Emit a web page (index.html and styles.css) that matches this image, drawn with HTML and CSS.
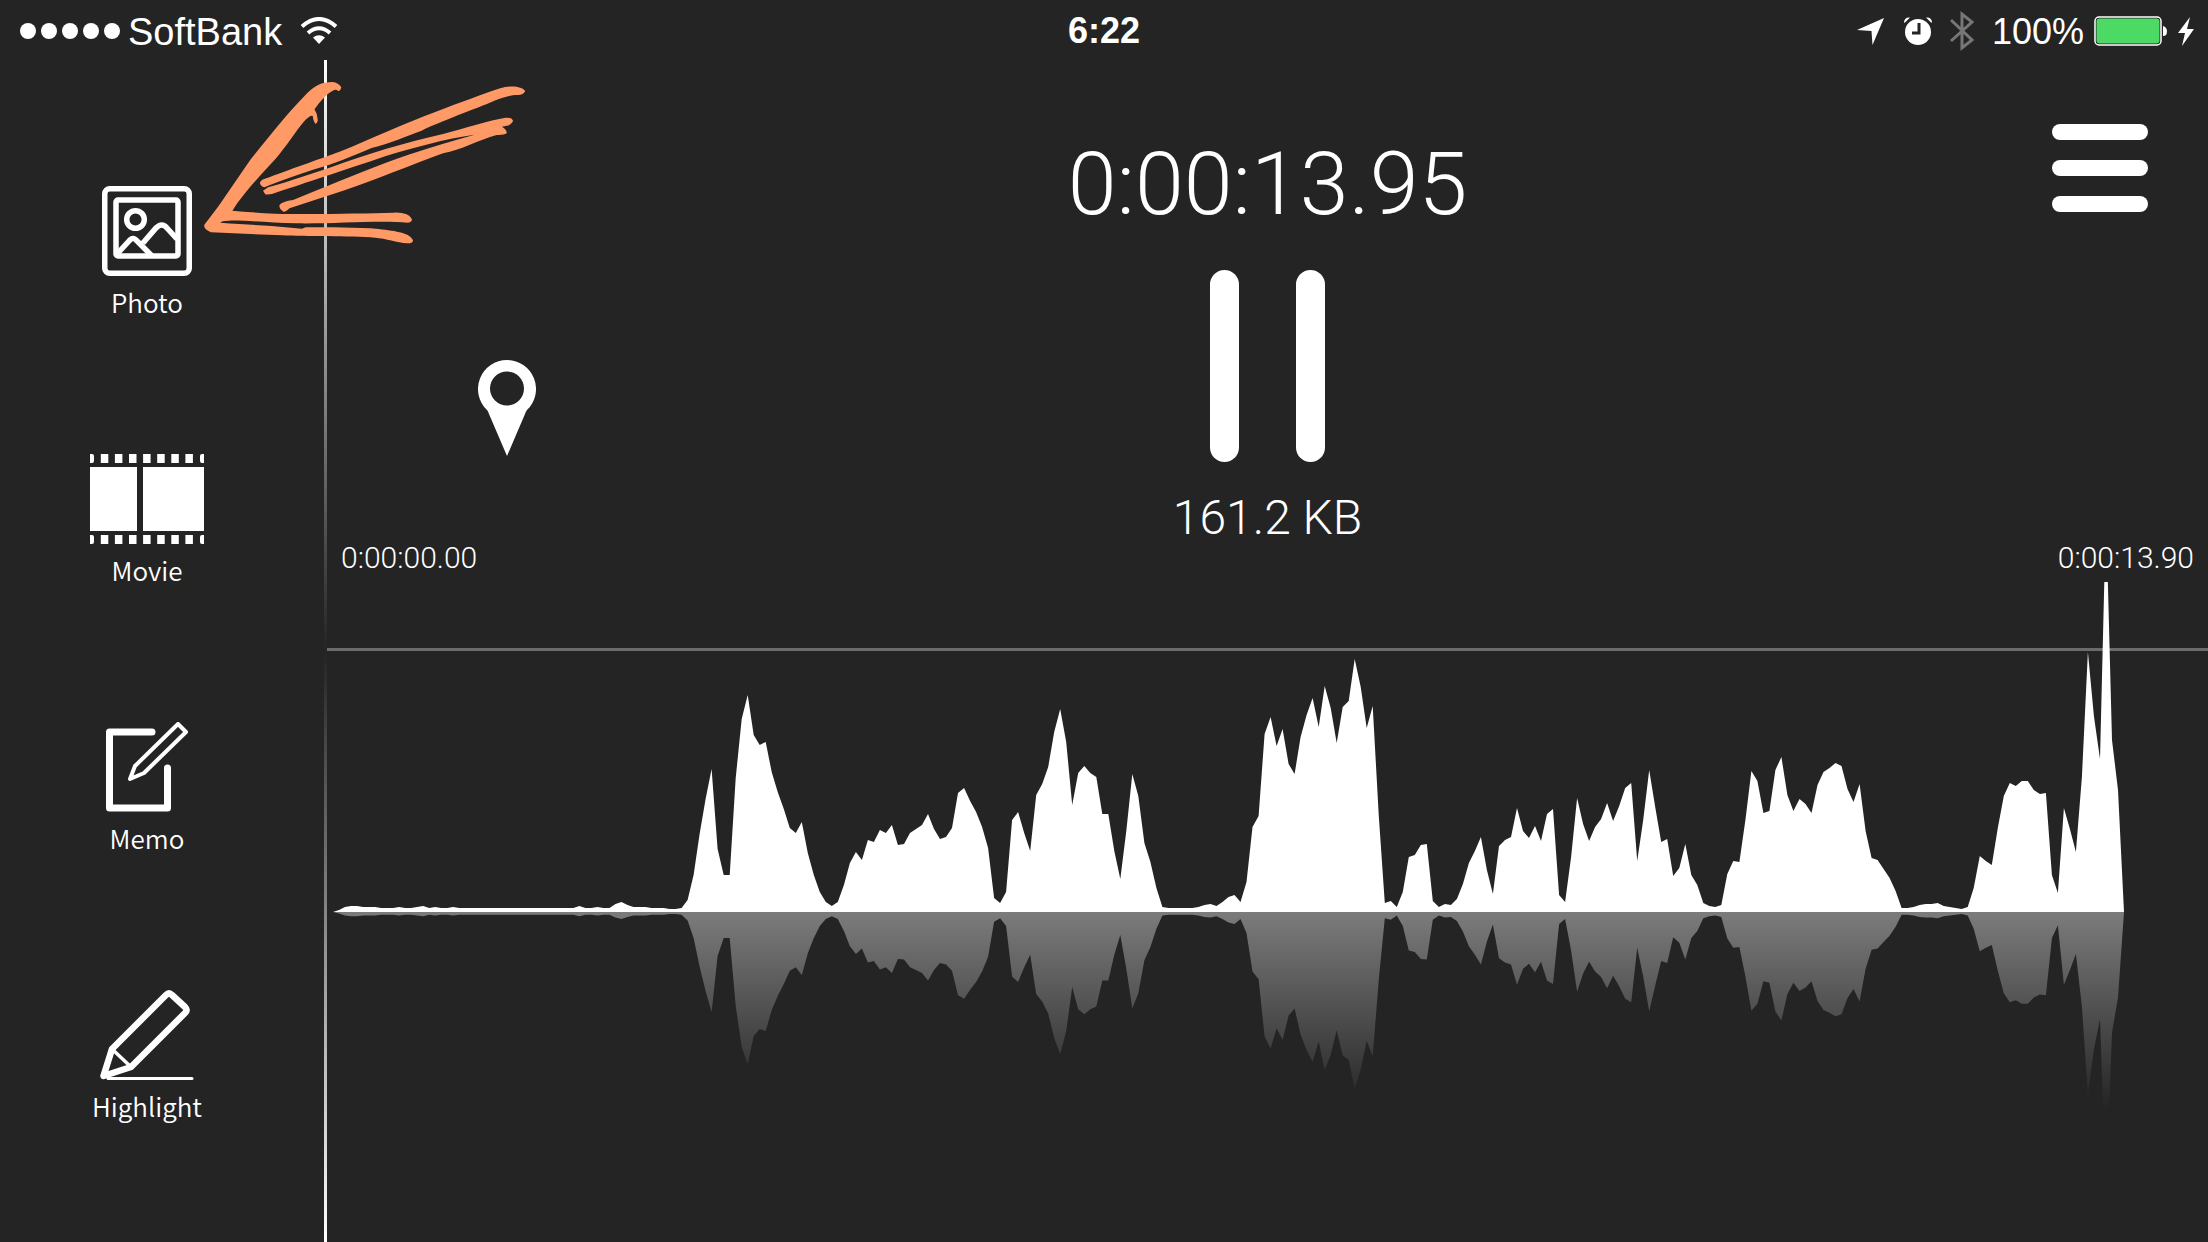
FILE: index.html
```html
<!DOCTYPE html>
<html lang="en">
<head>
<meta charset="utf-8">
<meta name="viewport" content="width=device-width, initial-scale=1">
<title>Recorder</title>
<link rel="stylesheet" href="styles.css">
</head>
<body>
<div class="app">
  <header class="status">
    <div class="status-left">
      <div class="signal"><i></i><i></i><i></i><i></i><i></i></div>
      <span class="carrier">SoftBank</span>
      <svg class="wifi" width="38" height="28" viewBox="0 0 38 28" fill="none" stroke="#fff" stroke-width="4">
        <path d="M2 9.500Q19 -5.500 36 9.500"/>
        <path d="M8 16Q19 6.500 30 16"/>
        <path d="M13 20.500Q19 16 25 20.500L19 27Z" fill="#fff" stroke="none"/>
      </svg>
    </div>
    <div class="clock">6:22</div>
    <div class="status-right">
      <svg width="27" height="27" viewBox="0 0 27 27" fill="#fff"><path d="M27 0L15.500 27L14.500 13L0 12Z"/></svg>
      <svg class="alarm" width="28" height="28" viewBox="0 0 28 28">
        <circle cx="14" cy="15" r="13" fill="#fff"/>
        <path d="M0 6Q0 0 6 0.500L1.500 5ZM28 6Q28 0 22 0.500L26.500 5Z" fill="#fff"/>
        <path d="M15 6V16H8" fill="none" stroke="#242424" stroke-width="3"/>
      </svg>
      <svg class="bluetooth" width="24" height="42" viewBox="0 0 24 42" fill="none" stroke="#777" stroke-width="3">
        <path d="M1 10L22 30L12 38V4L22 12L1 31"/>
      </svg>
      <span class="percent">100%</span>
      <svg class="battery" width="74" height="30" viewBox="0 0 74 30">
        <rect x="1" y="1" width="66" height="28" rx="4" fill="none" stroke="#fff" stroke-width="1.500"/>
        <rect x="2.500" y="2.500" width="63" height="25" rx="3" fill="#4cd964"/>
        <path d="M69 10Q73 11 73 15.500T69 20Z" fill="#fff"/>
      </svg>
      <svg class="bolt" width="16" height="29" viewBox="0 0 16 29" fill="#fff"><path d="M12 0L0 16H7L4 29L16 12H9Z"/></svg>
    </div>
  </header>

  <main class="main">
    <nav class="tools">
      <button class="tool" type="button">
        <svg width="90" height="90" viewBox="0 0 90 90" fill="none" stroke="#fff" stroke-width="5.500">
          <rect x="2.750" y="2.750" width="84.500" height="84.500" rx="5"/>
          <rect x="14" y="14" width="62" height="56" rx="2"/>
          <circle cx="33.500" cy="33.500" r="8.800"/>
          <path d="M15 68L27 55Q31 50 35 55L50 70M41 57L54 42Q60 36 65 42L75 53"/>
        </svg>
        <span>Photo</span>
      </button>
      <button class="tool" type="button">
        <svg width="114" height="90" viewBox="0 0 114 90" fill="#fff">
          <path d="M0 13H47V77H0ZM53 13H114V77H53Z"/>
          <path d="M10.800 4.500H104M10.800 85.500H104" stroke="#fff" stroke-width="9" stroke-dasharray="7.500 6.600"/>
          <path d="M0 0H2Q4 0 4 2V7Q4 9 2 9H0ZM0 81H2Q4 81 4 83V88Q4 90 2 90H0Z"/>
          <path d="M114 0H112Q110 0 110 2V7Q110 9 112 9H114ZM114 81H112Q110 81 110 83V88Q110 90 112 90H114Z"/>
        </svg>
        <span>Movie</span>
      </button>
      <button class="tool" type="button">
        <svg width="82" height="90" viewBox="0 0 82 90" fill="none" stroke="#fff" stroke-linecap="round" stroke-linejoin="round">
          <path d="M46 10H3.500V86H61.500V46" stroke-width="7"/>
          <path d="M72 2L80 10L38 51L24 57L29 44Z" stroke-width="4"/>
        </svg>
        <span>Memo</span>
      </button>
      <button class="tool" type="button">
        <svg width="94" height="90" viewBox="0 0 94 90" fill="none" stroke="#fff" stroke-linecap="round" stroke-linejoin="round">
          <path d="M3.500 86L12 59L66 5Q69 2 72 5L85 17Q88 20 85 23L31 77Z" stroke-width="6.500"/>
          <path d="M13 60L30 76" stroke-width="3.500"/>
          <path d="M8 88.500H92" stroke-width="3"/>
        </svg>
        <span>Highlight</span>
      </button>
    </nav>

    <div class="divider"></div>

    <section class="recorder">
      <div class="controls">
        <button class="pin" type="button" aria-label="Add location">
          <svg width="58" height="96" viewBox="0 0 58 96" fill="#fff" fill-rule="evenodd">
            <path d="M29 0A29 29 0 0 1 49 50Q48 51 47 54L29 96L11 54Q10 51 9 50A29 29 0 0 1 29 0ZM29 11.500A17 17 0 1 0 29 45.500A17 17 0 1 0 29 11.500Z"/>
          </svg>
        </button>
        <div class="center">
          <div class="timer">0:00:13.95</div>
          <button class="pause" type="button" aria-label="Pause"><i></i><i></i></button>
          <div class="size">161.2 KB</div>
        </div>
        <button class="menu" type="button" aria-label="Menu"><i></i><i></i><i></i></button>
      </div>
      <div class="times"><span>0:00:00.00</span><span>0:00:13.90</span></div>
      <svg class="wave" viewBox="0 0 1881 660" preserveAspectRatio="none">
        <defs>
          <linearGradient id="fade" gradientUnits="userSpaceOnUse" x1="0" y1="330" x2="0" y2="528">
            <stop offset="0" stop-color="#fff" stop-opacity="0.400"/>
            <stop offset="1" stop-color="#fff" stop-opacity="0"/>
          </linearGradient>
        </defs>
        <rect x="0" y="66" width="1881" height="3" fill="#6b6b6b"/>
        <polygon id="level" fill="#fff"/>
        <polygon id="mirror" fill="url(#fade)"/>
      </svg>
    </section>
  </main>

  <svg class="arrow" viewBox="565 240 910 495" preserveAspectRatio="none" fill="#ff9966">
    <path d="M573 672C585 655 600 635 612 617L700 480C760 400 800 345 850 290C880 255 900 246 930 246Q948 248 955 262Q953 273 947 273Q940 268 935 270C915 280 895 305 880 328Q890 345 889 362Q887 372 882 371Q876 362 875 348Q868 345 850 365C830 390 800 440 770 478C730 525 680 580 650 632Q700 637 770 641C880 644 1020 640 1100 638Q1145 636 1153 658Q1152 668 1142 668C1060 660 930 672 830 670C750 668 680 660 640 662Q620 662 616 668Q700 674 760 678L845 686L855 682C920 682 1000 682 1060 687C1110 693 1150 700 1156 722Q1153 731 1140 730C1110 728 1080 715 1050 713C980 708 850 710 790 706L590 697Q565 685 573 672Z"/>
    <path d="M727 548Q732 538 745 535C800 512 900 475 950 455C1050 412 1130 370 1220 335C1290 307 1350 283 1400 265C1430 255 1460 258 1470 273Q1465 285 1450 285C1420 284 1380 305 1340 322C1290 342 1230 368 1190 386L1180 392C1140 408 1090 430 1040 444C980 470 940 490 880 508C830 525 780 545 740 562Q728 558 727 548Z"/>
    <path d="M736 572L750 562C820 540 870 522 930 500C1020 465 1140 425 1240 402C1300 385 1370 360 1415 353Q1435 352 1436 364Q1430 376 1418 377L1405 380Q1420 390 1418 400Q1410 406 1390 405C1340 420 1290 450 1240 460C1150 495 1050 540 960 572L810 625Q800 636 793 635Q780 625 782 615Q790 604 820 600C900 565 1000 520 1080 488C1160 455 1260 425 1328 404C1250 415 1150 445 1080 468C960 512 850 550 775 577Q755 586 742 583Z"/>
  </svg>
</div>
<script src="wave.js"></script>
</body>
</html>
```
FILE: styles.css
```css
* {
  box-sizing: border-box;
}

body {
  margin: 0;
  background: #242424;
  color: #fff;
  font-family: "Liberation Sans", Arial, sans-serif;
}

button {
  padding: 0;
  border: 0;
  background: none;
  color: inherit;
  font: inherit;
  cursor: pointer;
}

svg {
  display: block;
  flex: none;
}

.app {
  position: relative;
  display: flex;
  flex-direction: column;
  min-height: 100vh;
}

.status {
  display: grid;
  grid-template-columns: 1fr auto 1fr;
  align-items: center;
  height: 60px;
  padding: 0 14px;
  font-size: 36px;
  line-height: 60px;
}

.status-left,
.status-right {
  display: flex;
  align-items: center;
}

.status-right {
  justify-content: flex-end;
}

.signal {
  display: flex;
  gap: 5px;
  margin: 0 8px 0 6px;
}

.signal i {
  width: 16px;
  height: 16px;
  border-radius: 50%;
  background: #fff;
}

.carrier {
  padding-top: 2px;
  font-size: 38px;
}

.wifi {
  margin-left: 18px;
}

.clock {
  font-weight: bold;
}

.alarm {
  margin-left: 20px;
}

.bluetooth {
  margin-left: 18px;
}

.percent {
  margin-left: 18px;
  padding-top: 2px;
}

.battery {
  margin-left: 10px;
}

.bolt {
  margin-left: 10px;
}

.main {
  display: flex;
  flex: 1;
}

.tools {
  display: flex;
  flex-direction: column;
  gap: 132px;
  width: 324px;
  padding: 126px 30px 0 0;
}

.tool {
  display: flex;
  flex-direction: column;
  align-items: center;
  gap: 6px;
  font-family: "Noto Sans CJK JP", "Noto Sans", sans-serif;
  font-size: 26px;
  font-weight: 350;
  line-height: 40px;
}

.divider {
  width: 3px;
  background: linear-gradient(#fff, #242424 50%, #fff);
}

.recorder {
  display: flex;
  flex: 1;
  flex-direction: column;
  min-width: 0;
  font-family: Roboto, Lato, sans-serif;
  font-weight: 300;
}

.controls {
  display: grid;
  grid-template-columns: 1fr auto 1fr;
  align-items: start;
  height: 476px;
}

.pin {
  justify-self: start;
  margin: 300px 0 0 151px;
}

.center {
  display: flex;
  flex-direction: column;
  align-items: center;
  padding-top: 68px;
}

.timer {
  font-size: 88px;
  line-height: 112px;
}

.pause {
  display: flex;
  gap: 57px;
  margin: 30px 0;
}

.pause i {
  width: 29px;
  height: 192px;
  border-radius: 15px;
  background: #fff;
}

.size {
  font-size: 48px;
  line-height: 52px;
}

.menu {
  display: flex;
  flex-direction: column;
  justify-self: end;
  gap: 20px;
  margin: 64px 60px 0 0;
}

.menu i {
  width: 96px;
  height: 16px;
  border-radius: 8px;
  background: #fff;
}

.times {
  display: flex;
  justify-content: space-between;
  height: 46px;
  padding: 0 14px;
  font-size: 30px;
  line-height: 44px;
}

.wave {
  flex: 1 1 0;
  width: 100%;
  min-height: 0;
}

.arrow {
  position: absolute;
  top: 80px;
  left: 202px;
  width: 325px;
  height: 165px;
}
```
FILE: wave.js
```js
// Recorded level, one sample per bar, in chart units above the base line.
const levels = [
  0, 2, 5, 6, 6, 5, 5, 5, 4, 4, 4, 5, 4, 4, 5, 6, 4, 5, 4, 4,
  5, 4, 4, 4, 4, 4, 4, 4, 4, 4, 4, 4, 4, 4, 4, 4, 4, 4, 4, 4,
  4, 6, 4, 4, 5, 4, 4, 8, 10, 7, 5, 5, 5, 4, 4, 4, 3, 3,
  4, 12, 37, 78, 113, 143, 63, 37, 37, 134, 193, 217, 177, 167, 170, 140,
  120, 103, 84, 79, 90, 59, 37, 20, 10, 6, 10, 27, 49, 60, 52, 72, 70, 82,
  79, 87, 67, 68, 79, 83, 87, 98, 83, 73, 75, 84, 119, 124, 111, 100, 85,
  64, 14, 9, 20, 92, 100, 79, 61, 117, 128, 145, 180, 203, 170, 107, 139,
  146, 139, 135, 98, 98, 61, 33, 81, 138, 116, 69, 50, 24,
  5, 4, 4, 4, 4, 4, 5, 7, 8, 6, 10, 15, 17, 10, 30, 85, 96, 178, 195, 166,
  183, 148, 138, 175, 197, 214, 185, 226, 204, 169, 205, 211, 253, 225,
  184, 206, 96, 9, 11, 5, 20, 55, 57, 67, 68, 11, 5, 8, 7, 13, 28, 49, 61,
  75, 42, 18, 66, 72, 75, 104, 81, 74, 86, 71, 98, 103, 17, 10, 55, 114,
  88, 71, 85, 93, 109, 91, 106, 124, 129, 51, 92, 142, 105, 70, 73, 36,
  44, 68, 37, 27, 9, 6, 5, 7, 38, 51, 50, 92, 141, 131, 99, 101, 142, 155,
  117, 101, 113, 108, 99, 127, 140, 144, 149, 146, 123, 110, 128, 81, 54,
  52, 43, 34, 21, 4, 4, 5, 7, 8, 8, 9, 6, 5, 4, 3, 5, 24, 56, 51, 47, 84,
  116, 129, 126, 131, 131, 122, 118, 119, 37, 19, 104, 83, 60, 135, 260,
  196, 153, 400, 172, 122, 0
];

const START = 6;
const END = 1797;
const BASE = 330;

function outline(scale) {
  const step = (END - START) / (levels.length - 1);
  return levels
    .map((v, i) => (START + i * step).toFixed(1) + "," + (BASE - v * scale).toFixed(1))
    .join(" ");
}

document.getElementById("level").setAttribute("points", outline(1));
document.getElementById("mirror").setAttribute("points", outline(-0.7));
```
